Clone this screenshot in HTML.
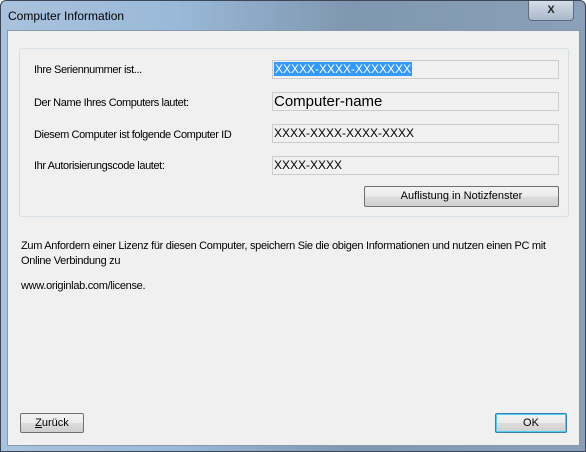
<!DOCTYPE html>
<html><head><meta charset="utf-8"><style>
*{margin:0;padding:0;box-sizing:border-box}
body{width:586px;height:452px;overflow:hidden;font-family:"Liberation Sans",sans-serif;font-size:11px;color:#000;background:#fff}
.win{position:absolute;left:0;top:0;width:586px;height:452px;border:1px solid #3b4756;border-radius:6px 6px 0 0;background:linear-gradient(90deg,#a9c3dd 0%,#9ab8d8 30%,#7f97b0 60%,#8aa0b8 100%)}
.title{position:absolute;left:7px;top:8px;font-size:12px;color:#000}
.close{position:absolute;left:527px;top:0;width:46px;height:20px;border:1px solid #5e6b7a;border-top:none;border-radius:0 0 4px 4px;background:linear-gradient(#d4dde8,#aab8c8);text-align:center;font-weight:bold;font-size:11px;line-height:18px;color:#222}
.client{position:absolute;left:6px;top:29px;width:573px;height:416px;background:#f0f0f0;border:1px solid #8a99aa}
.grp{position:absolute;left:11px;top:17px;width:550px;height:169px;border:1px solid #d5dfe5;border-radius:3px}
.lbl{position:absolute;left:26px;letter-spacing:-0.4px}
.fld{position:absolute;left:264px;width:287px;height:19px;border:1px solid #c8cdd2;background:#f0f0f0;font-size:12px;line-height:17px;padding-left:1px}
.btn{position:absolute;border:1px solid #707070;border-radius:2px;background:linear-gradient(#f2f2f2 0%,#ebebeb 50%,#dddddd 51%,#cfcfcf 100%);text-align:center;line-height:18px}
p{position:absolute;left:13px;letter-spacing:-0.3px;line-height:15px}
</style></head><body>
<div class="win">
<div class="title">Computer Information</div>
<div class="close">X</div>
<div class="client">
<div class="grp"></div>
<div class="lbl" style="top:33px">Ihre Seriennummer ist...</div>
<div class="fld" style="top:29px;color:#fff"><span style="background:#3399ff;padding:0 1px">XXXXX-XXXX-XXXXXXX</span></div>
<div class="lbl" style="top:66px">Der Name Ihres Computers lautet:</div>
<div class="fld" style="top:61px;font-size:15px">Computer-name</div>
<div class="lbl" style="top:98px">Diesem Computer ist folgende Computer ID</div>
<div class="fld" style="top:93px">XXXX-XXXX-XXXX-XXXX</div>
<div class="lbl" style="top:129px">Ihr Autorisierungscode lautet:</div>
<div class="fld" style="top:125px">XXXX-XXXX</div>
<div class="btn" style="left:356px;top:155px;width:195px;height:21px">Auflistung in Notizfenster</div>
<p style="top:208px">Zum Anfordern einer Lizenz für diesen Computer, speichern Sie die obigen Informationen und nutzen einen PC mit<br>Online Verbindung zu</p>
<p style="top:248px">www.originlab.com/license.</p>
<div class="btn" style="left:12px;top:382px;width:64px;height:20px"><u>Z</u>urück</div>
<div class="btn" style="left:487px;top:382px;width:72px;height:20px;border-color:#3c7fb1;box-shadow:inset 0 0 0 1px #48d0f5">OK</div>
</div>
</div>
</body></html>
